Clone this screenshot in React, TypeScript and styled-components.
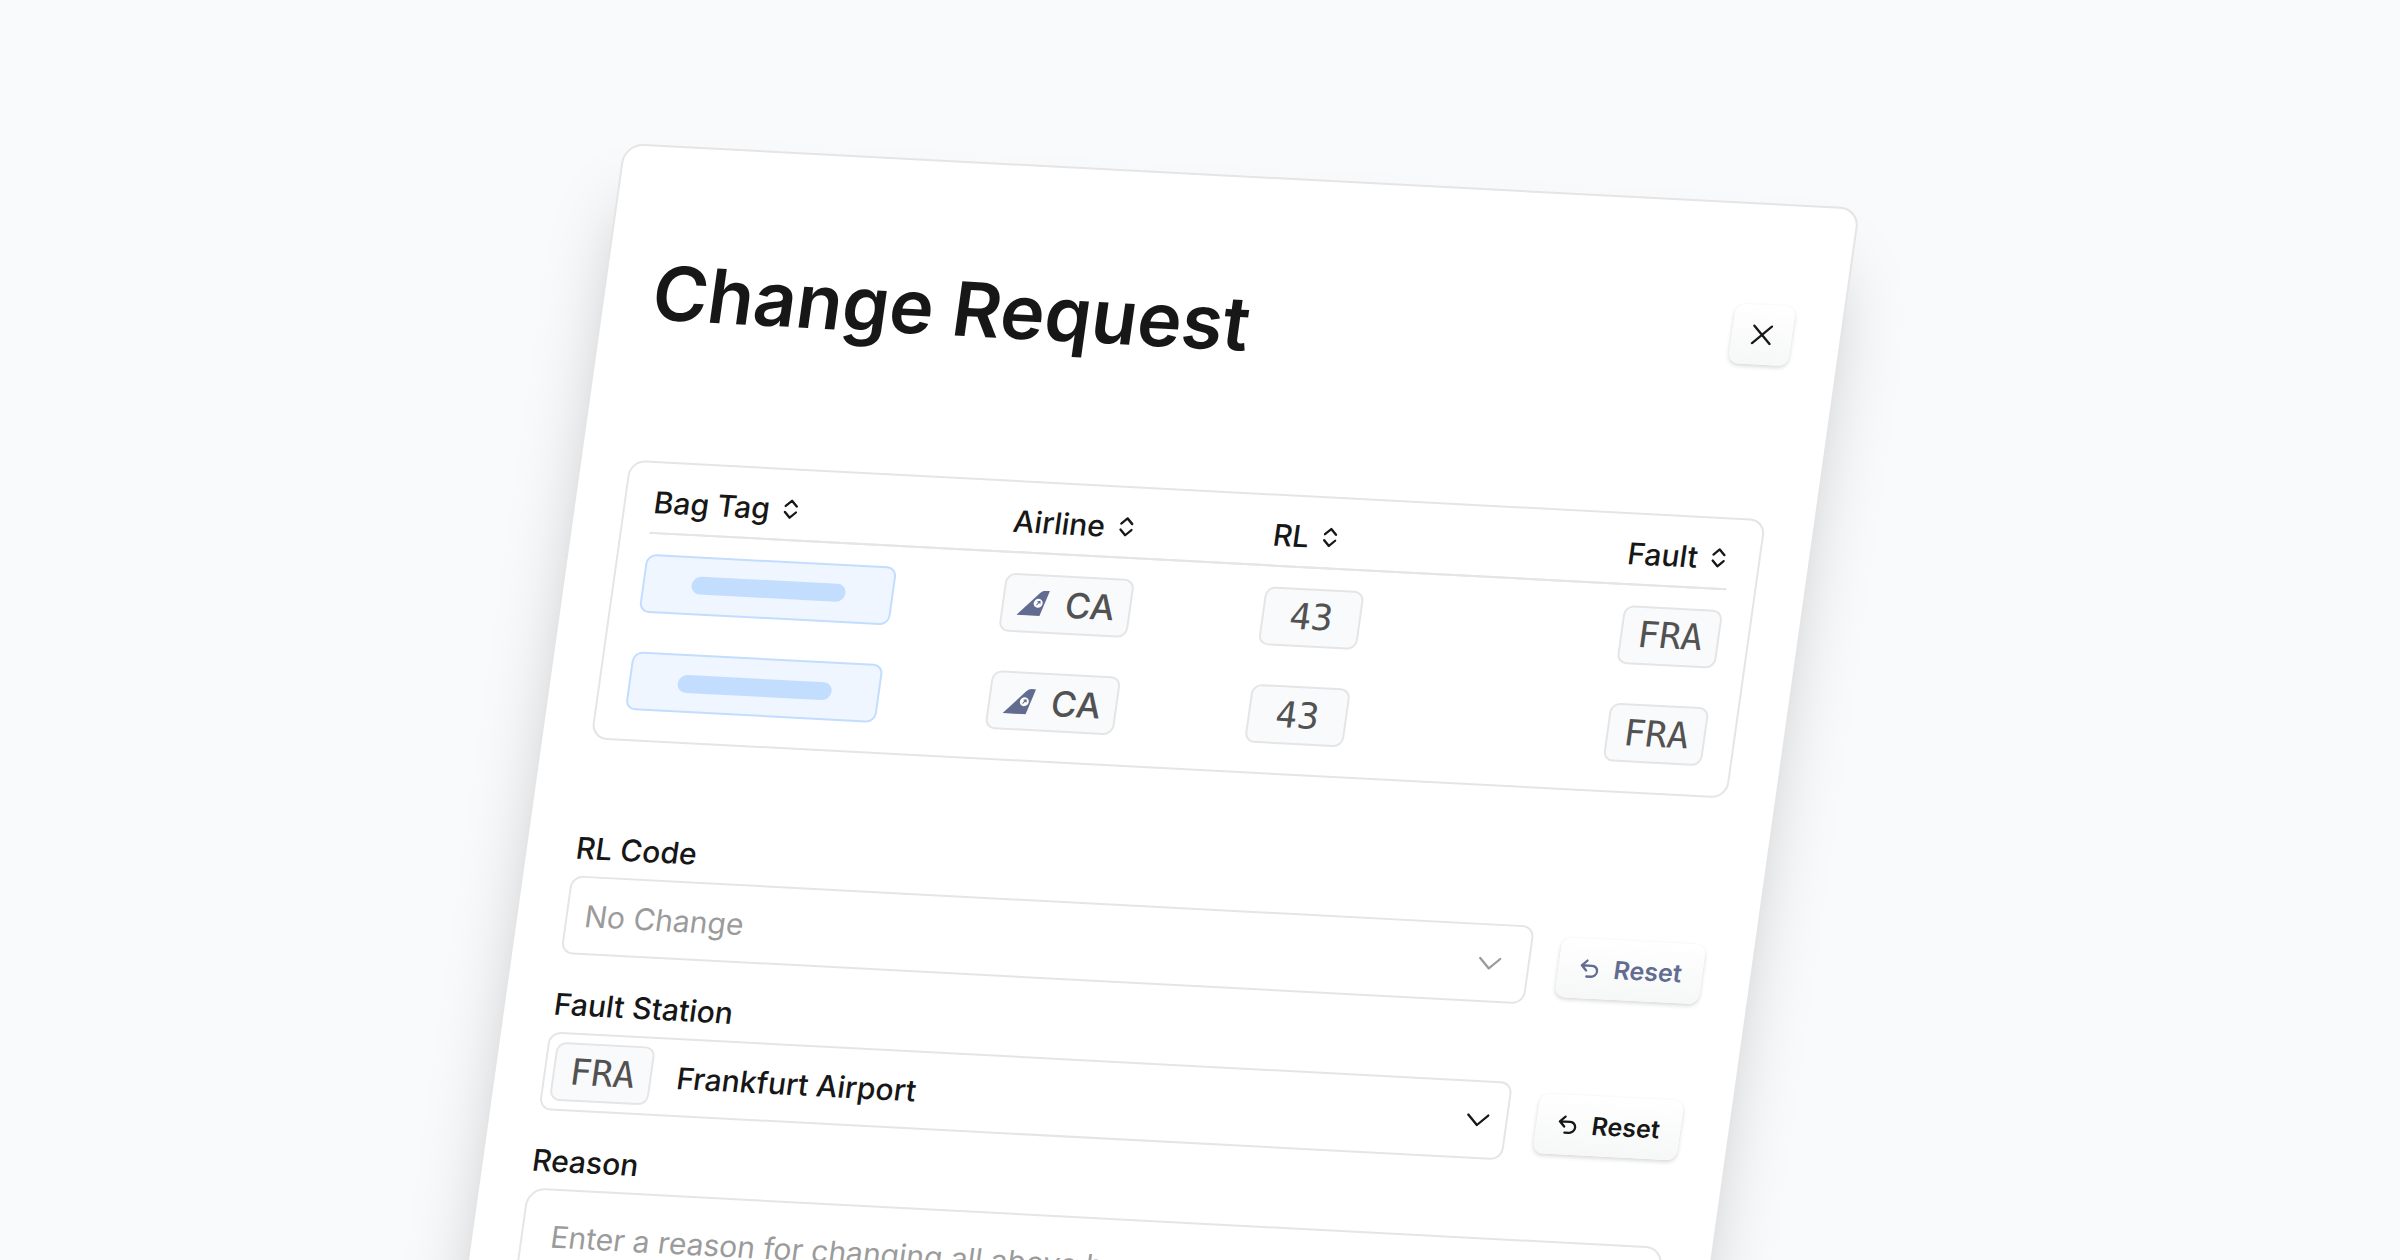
import React from "react";
import styled, { createGlobalStyle, css } from "styled-components";

const GlobalStyle = createGlobalStyle`
  *, *::before, *::after { box-sizing: border-box; }
  html, body { margin: 0; background: #f9fafc; overflow: hidden; }
  body, button, input, select, textarea { font-family: Inter, "Liberation Sans", sans-serif; }
`;

const ink = "#171717";
const muted = "#9b9b9b";
const line = "#e5e5e5";
const slate = "#626c91";

const Stage = styled.main`
  height: 100vh;
  overflow: hidden;
  padding: 143px 22.4% 0 26%;
  background: #f9fafc;
  color: ${ink};
`;

const Dialog = styled.section`
  width: 100%;
  min-width: 1160px;
  padding: 100px 48px 48px;
  border: 2px solid ${line};
  border-radius: 20px;
  background: #fff;
  box-shadow: 0 52px 75px -18px rgba(0, 0, 0, 0.25);
  transform: rotate(3deg) skewX(-5deg);
  transform-origin: top left;
`;

const Header = styled.header`
  display: flex;
  align-items: flex-start;
  justify-content: space-between;
  height: 214px;
`;

const Title = styled.h1`
  margin: 0;
  font-size: 75px;
  line-height: 92px;
  font-weight: 600;
`;

const raised = css`
  display: flex;
  align-items: center;
  justify-content: center;
  height: 60px;
  padding: 0;
  border: 0;
  border-radius: 10px;
  background: linear-gradient(#fff, #f6f7f7);
  box-shadow: 0 2px 4px rgba(0, 0, 0, 0.16), 0 0 2px rgba(0, 0, 0, 0.02);
`;

const CloseButton = styled.button`
  ${raised}
  width: 60px;
  color: ${ink};
`;

const ResetButton = styled.button<{ $tone: string }>`
  ${raised}
  flex: none;
  width: 144px;
  gap: 14px;
  color: ${(p) => p.$tone};
  font-size: 25px;
  font-weight: 600;
`;

const TableFrame = styled.div`
  padding: 0 28px 9px;
  border: 2px solid ${line};
  border-radius: 16px;
`;

const Table = styled.table`
  width: 100%;
  table-layout: fixed;
  border-collapse: collapse;
`;

const HeadCell = styled.th<{ $width?: number; $end?: boolean }>`
  width: ${(p) => (p.$width ? p.$width + "px" : "auto")};
  height: 70px;
  padding: 9px 0 0;
  border-bottom: 2px solid ${line};
  text-align: ${(p) => (p.$end ? "right" : "left")};
  font-weight: 500;
`;

const SortButton = styled.button`
  display: inline-flex;
  align-items: center;
  gap: 9px;
  padding: 0;
  border: 0;
  background: none;
  color: ${ink};
  font-size: 30px;
  line-height: 36px;
  font-weight: 500;
`;

const Cell = styled.td`
  height: 99px;
  padding: 0;
`;

const Chip = styled.span<{ $width: number; $mono?: boolean; $end?: boolean }>`
  display: flex;
  flex: none;
  align-items: center;
  justify-content: center;
  gap: 17px;
  width: ${(p) => p.$width}px;
  height: 59px;
  margin-left: ${(p) => (p.$end ? "auto" : "0")};
  border: 2px solid ${line};
  border-radius: 10px;
  background: #f9fafc;
  color: #525252;
  font-family: ${(p) => (p.$mono ? '"DejaVu Sans Mono", monospace' : "inherit")};
  font-size: ${(p) => (p.$mono ? 36 : 35)}px;
  line-height: 44px;
  font-weight: ${(p) => (p.$mono ? 400 : 500)};
`;

const TagChip = styled.span`
  display: flex;
  align-items: center;
  justify-content: center;
  width: 251px;
  height: 59px;
  border: 2px solid #c3ddfe;
  border-radius: 10px;
  background: #eff6ff;
`;

const TagBar = styled.span`
  width: 154px;
  height: 18px;
  border-radius: 9px;
  background: #c3ddfe;
`;

const Form = styled.form`
  display: flex;
  flex-direction: column;
  gap: 32px;
  padding-top: 91px;
`;

const Field = styled.div`
  display: flex;
  flex-direction: column;
  gap: 10px;
`;

const Label = styled.label`
  padding-left: 1px;
  font-size: 30px;
  line-height: 36px;
  font-weight: 500;
`;

const Row = styled.div`
  display: flex;
  align-items: center;
  gap: 29px;
`;

const SelectBox = styled.div<{ $tone: string; $inset: number }>`
  display: flex;
  flex: 1;
  align-items: center;
  gap: 22px;
  height: 79px;
  padding: 0 ${(p) => p.$inset}px 0 7px;
  border: 2px solid ${line};
  border-radius: 12px;
  color: ${(p) => p.$tone};
`;

const Select = styled.select<{ $indent?: boolean }>`
  flex: 1;
  appearance: none;
  padding: 0 0 0 ${(p) => (p.$indent ? 10 : 3)}px;
  border: 0;
  outline: 0;
  background: none;
  color: inherit;
  font-size: 30px;
  line-height: 40px;
  font-weight: ${(p) => (p.$indent ? 400 : 500)};
`;

const TextArea = styled.textarea`
  height: 240px;
  padding: 26px 28px;
  border: 2px solid ${line};
  border-radius: 18px;
  outline: 0;
  resize: none;
  background: none;
  font-size: 30px;
  line-height: 40px;
  &::placeholder { color: ${muted}; }
`;

const Sort = () => (
  <svg width="24" height="24" viewBox="0 0 24 24" fill="none" stroke="currentColor" strokeWidth="2.3" strokeLinecap="round" strokeLinejoin="round" aria-hidden="true">
    <path d="M6.5 9L12 3.5 17.5 9M6.5 15l5.5 5.5 5.5-5.5" />
  </svg>
);

const Chevron = () => (
  <svg width="24" height="24" viewBox="0 0 24 24" fill="none" stroke="currentColor" strokeWidth="2.3" strokeLinecap="round" strokeLinejoin="round" aria-hidden="true">
    <path d="M2 7l10 10L22 7" />
  </svg>
);

const Close = () => (
  <svg width="20" height="20" viewBox="0 0 20 20" fill="none" stroke="currentColor" strokeWidth="2.3" strokeLinecap="round" aria-hidden="true">
    <path d="M1 1l18 18M19 1L1 19" />
  </svg>
);

const Undo = () => (
  <svg width="20" height="20" viewBox="0 0 20 20" fill="none" stroke="currentColor" strokeWidth="2.3" strokeLinecap="round" strokeLinejoin="round" aria-hidden="true">
    <path d="M7 2L2 7l5 5M2 7h10.5a5.5 5.5 0 0 1 0 11H8" />
  </svg>
);

const Tail = () => (
  <svg width="30" height="26" viewBox="0 0 30 26" aria-hidden="true">
    <path d="M0 25.5L20.5 2.5Q23 0 26 0h4l-7 25.5z" fill={slate} />
    <circle cx="20" cy="13" r="4.5" fill="#fff" />
    <path d="M18.5 15l3-4M19 11.5l2.5-.5.5 2.500" stroke={slate} strokeWidth="1" fill="none" />
  </svg>
);

const columns = [
  { name: "Bag Tag", width: 360 },
  { name: "Airline", width: 260 },
  { name: "RL", width: 260 },
  { name: "Fault", end: true },
];

const bags = [
  { id: 1, airline: "CA", rl: "43", fault: "FRA" },
  { id: 2, airline: "CA", rl: "43", fault: "FRA" },
];

export default function App() {
  return (
    <>
      <GlobalStyle />
      <Stage>
        <Dialog role="dialog" aria-labelledby="title">
          <Header>
            <Title id="title">Change Request</Title>
            <CloseButton aria-label="Close"><Close /></CloseButton>
          </Header>
          <TableFrame>
            <Table>
              <thead>
                <tr>
                  {columns.map((c) => (
                    <HeadCell key={c.name} $width={c.width} $end={c.end}>
                      <SortButton>{c.name}<Sort /></SortButton>
                    </HeadCell>
                  ))}
                </tr>
              </thead>
              <tbody>
                {bags.map((b) => (
                  <tr key={b.id}>
                    <Cell><TagChip><TagBar /></TagChip></Cell>
                    <Cell><Chip $width={129}><Tail />{b.airline}</Chip></Cell>
                    <Cell><Chip $width={99} $mono>{b.rl}</Chip></Cell>
                    <Cell><Chip $width={99} $mono $end>{b.fault}</Chip></Cell>
                  </tr>
                ))}
              </tbody>
            </Table>
          </TableFrame>
          <Form>
            <Field>
              <Label htmlFor="rl">RL Code</Label>
              <Row>
                <SelectBox $tone={muted} $inset={26}>
                  <Select id="rl" $indent><option>No Change</option></Select>
                  <Chevron />
                </SelectBox>
                <ResetButton type="button" $tone={slate}><Undo />Reset</ResetButton>
              </Row>
            </Field>
            <Field>
              <Label htmlFor="station">Fault Station</Label>
              <Row>
                <SelectBox $tone={ink} $inset={16}>
                  <Chip $width={99} $mono>FRA</Chip>
                  <Select id="station"><option>Frankfurt Airport</option></Select>
                  <Chevron />
                </SelectBox>
                <ResetButton type="button" $tone={ink}><Undo />Reset</ResetButton>
              </Row>
            </Field>
            <Field>
              <Label htmlFor="reason">Reason</Label>
              <TextArea id="reason" placeholder="Enter a reason for changing all above b" />
            </Field>
          </Form>
        </Dialog>
      </Stage>
    </>
  );
}
